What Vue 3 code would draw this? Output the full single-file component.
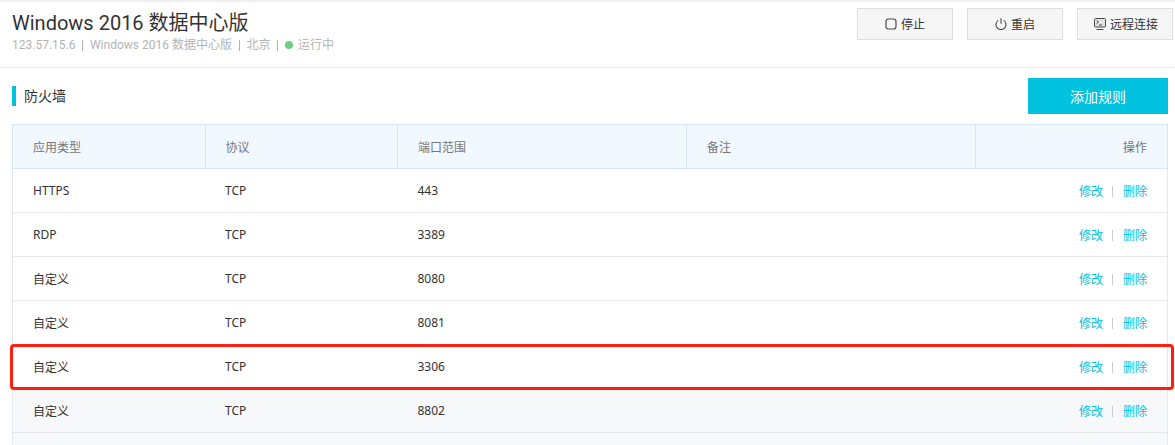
<script setup>
import { ref } from "vue";

const columns = ["应用类型", "协议", "端口范围", "备注"];

const rules = ref([
  { type: "HTTPS", protocol: "TCP", port: "443" },
  { type: "RDP", protocol: "TCP", port: "3389" },
  { type: "自定义", protocol: "TCP", port: "8080" },
  { type: "自定义", protocol: "TCP", port: "8081" },
  { type: "自定义", protocol: "TCP", port: "3306", marked: true },
  { type: "自定义", protocol: "TCP", port: "8802", hover: true },
]);
</script>

<template>
  <div class="page">
    <header class="top">
      <div>
        <h1 class="title">Windows 2016 数据中心版</h1>
        <p class="meta">
          <span>123.57.15.6</span><i class="sep"></i>
          <span>Windows 2016 数据中心版</span><i class="sep"></i>
          <span>北京</span><i class="sep"></i>
          <b class="dot"></b><span>运行中</span>
        </p>
      </div>
      <div class="actions">
        <button class="btn">
          <svg width="12" height="12" viewBox="0 0 12 12" fill="none" stroke="#4a4a4a" stroke-width="1.2">
            <rect x="1" y="1" width="10" height="10" rx="2.5" />
          </svg>
          停止
        </button>
        <button class="btn">
          <svg width="12" height="12" viewBox="0 0 12 12" fill="none" stroke="#4a4a4a" stroke-width="1.1">
            <path d="M3.3 2.4a5 5 0 1 0 5.4 0M6 .2v5.6" />
          </svg>
          重启
        </button>
        <button class="btn btn-wide">
          <svg width="12" height="12" viewBox="0 0 12 12" fill="none" stroke="#4a4a4a" stroke-width="1">
            <rect x=".5" y=".5" width="11" height="8.5" rx="1" fill="#e4e4e4" />
            <path d="M2.5 11.5h7M2.6 2.6l1.8 1.6-1.8 1.6M5 7h3" />
          </svg>
          远程连接
        </button>
      </div>
    </header>

    <section class="content">
      <div class="section-head">
        <h2 class="section-title">防火墙</h2>
        <button class="add">添加规则</button>
      </div>

      <table class="rules">
        <colgroup>
          <col class="c1" /><col class="c2" /><col class="c3" /><col class="c4" /><col />
        </colgroup>
        <thead>
          <tr>
            <th v-for="col in columns" :key="col">{{ col }}</th>
            <th class="right">操作</th>
          </tr>
        </thead>
        <tbody>
          <tr v-for="rule in rules" :key="rule.port" :class="{ hover: rule.hover }">
            <td>{{ rule.type }}</td>
            <td>{{ rule.protocol }}</td>
            <td>{{ rule.port }}</td>
            <td></td>
            <td class="right ops">
              <a>修改</a><i class="op-sep"></i><a>删除</a>
            </td>
          </tr>
          <tr class="hover filler"><td colspan="5"></td></tr>
        </tbody>
      </table>
    </section>

    <div class="mark"></div>
  </div>
</template>

<style>
html,
body {
  margin: 0;
  background: #fff;
  overflow: hidden;
}
</style>

<style scoped>
.page {
  position: relative;
  width: 1175px;
  height: 445px;
  overflow: hidden;
  font-family: "Noto Sans", "Noto Sans CJK SC", sans-serif;
  font-size: 12px;
  color: #333;
}
.top {
  display: flex;
  justify-content: space-between;
  height: 68px;
  box-sizing: border-box;
  padding: 8px 2px 0 12px;
  border-bottom: 1px solid #e8e8e8;
  background: linear-gradient(#ececec, #fff 3px);
}
.title {
  margin: 0;
  font-family: Roboto, "Noto Sans CJK SC", sans-serif;
  font-size: 20px;
  font-weight: 400;
  line-height: 30px;
  color: #333;
}
.meta {
  display: flex;
  align-items: center;
  margin: 0;
  font-family: Roboto, "Noto Sans CJK SC", sans-serif;
  line-height: 14px;
  color: #b4b4b4;
}
.sep {
  width: 1px;
  height: 11px;
  margin: 0 6.75px;
  background: #b4b4b4;
}
.dot {
  width: 8px;
  height: 8px;
  margin-right: 5px;
  border-radius: 50%;
  background: #6fcf7f;
}
.actions {
  display: flex;
  gap: 14px;
}
.btn {
  display: flex;
  align-items: center;
  justify-content: center;
  gap: 4px;
  width: 96px;
  height: 32px;
  padding: 0;
  border: 1px solid #ddd;
  background: #f6f6f6;
  color: #333;
  font: inherit;
}
.btn-wide {
  padding-left: 2px;
}
.content {
  padding: 10px 7px 0 12px;
}
.section-head {
  display: flex;
  justify-content: space-between;
  align-items: center;
  height: 36px;
  margin-bottom: 10px;
}
.section-title {
  margin: 0;
  padding-left: 8px;
  border-left: 4px solid #00c1de;
  font-size: 14px;
  font-weight: 400;
  line-height: 20px;
}
.add {
  width: 140px;
  height: 36px;
  padding: 0;
  border: 0;
  background: #00c1de;
  color: #fff;
  font: inherit;
  font-size: 14px;
}
.rules {
  width: 1156px;
  border-collapse: collapse;
  table-layout: fixed;
}
.c1,
.c2 {
  width: 192.5px;
}
.c3,
.c4 {
  width: 289px;
}
th,
td {
  height: 44px;
  box-sizing: border-box;
  padding: 0 20px;
  border: 1px solid #e5e8ec;
  border-width: 0 1px 1px;
  text-align: left;
  font-weight: 400;
}
th {
  background: #f1f8ff;
  border: 1px solid #d4e6f7;
  color: #777;
}
td + td {
  border-left: 0;
}
td:not(:last-child) {
  border-right: 0;
}
.right {
  text-align: right;
}
.ops a {
  color: #00c1de;
}
.op-sep {
  display: inline-block;
  width: 1px;
  height: 11px;
  margin: 0 10px 0 9px;
  vertical-align: -1px;
  background: #c8cdd4;
}
.hover td {
  background: #f7f8fa;
}
.mark {
  position: absolute;
  left: 10px;
  top: 344px;
  width: 1164px;
  height: 46px;
  box-sizing: border-box;
  border: 3px solid #ff1f12;
  border-radius: 4px;
}
</style>
